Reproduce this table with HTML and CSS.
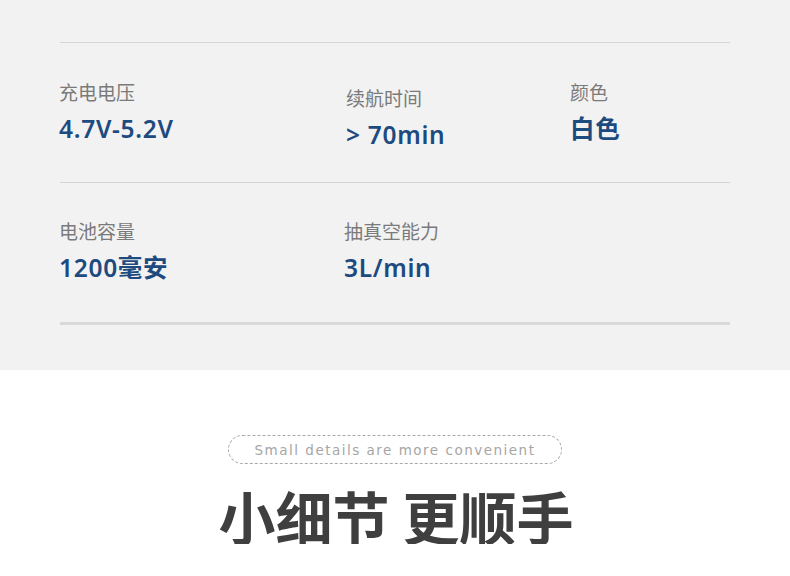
FILE: index.html
```html
<!DOCTYPE html>
<html lang="zh-CN">
<head>
<meta charset="utf-8">
<title>参数</title>
<link rel="stylesheet" href="styles.css">
</head>
<body>
<section class="specs">
  <div class="row">
    <div class="item">
      <div class="label">充电电压</div>
      <div class="value">4.7V-5.2V</div>
    </div>
    <div class="item item-low">
      <div class="label">续航时间</div>
      <div class="value">&gt; 70min</div>
    </div>
    <div class="item">
      <div class="label">颜色</div>
      <div class="value">白色</div>
    </div>
  </div>
  <div class="row row-last">
    <div class="item item-up">
      <div class="label">电池容量</div>
      <div class="value">1200毫安</div>
    </div>
    <div class="item item-up item-shift">
      <div class="label">抽真空能力</div>
      <div class="value">3L/min</div>
    </div>
  </div>
</section>
<section class="details">
  <div class="pill">Small details are more convenient</div>
  <h2 class="headline">小细节 更顺手</h2>
</section>
</body>
</html>
```

FILE: styles.css
```css
html, body {
  margin: 0;
  padding: 0;
  background: #ffffff;
}
body {
  font-family: "Noto Sans CJK SC", "Noto Sans", sans-serif;
  width: 790px;
  overflow: hidden;
}
.specs {
  background: #f2f2f2;
  height: 370px;
  box-sizing: border-box;
  padding: 42px 60px 0 60px;
}
.row {
  display: grid;
  grid-template-columns: 287px 224px 1fr;
  border-top: 1px solid #d6d6d6;
  height: 139px;
  box-sizing: content-box;
}
.row-last {
  border-bottom: 3px solid #d9d9d9;
}
.item {
  padding-top: 39px;
  display: flex;
  flex-direction: column;
  gap: 12px;
}
.item-low {
  padding-top: 45px;
}
.item-up {
  padding-top: 38px;
}
.item-shift {
  margin-left: -2px;
}
.label {
  font-size: 19px;
  line-height: 20px;
  color: #7a7a7a;
  margin-left: -1px;
}
.value {
  font-family: "Noto Sans", "Noto Sans CJK SC", sans-serif;
  font-size: 24.5px;
  line-height: 30px;
  font-weight: 600;
  letter-spacing: 0.7px;
  color: #1d4a7f;
  margin-left: -1px;
}
.details {
  display: flex;
  flex-direction: column;
  align-items: center;
  padding-top: 65px;
}
.pill {
  width: 334px;
  height: 29px;
  box-sizing: border-box;
  border: 1px dashed #a8a8a8;
  border-radius: 15px;
  display: flex;
  align-items: center;
  justify-content: center;
  font-family: "DejaVu Sans", sans-serif;
  font-size: 13.5px;
  letter-spacing: 1.5px;
  color: #a6a6a6;
}
.headline {
  margin: 23px 0 0 0;
  font-size: 57px;
  line-height: 57px;
  font-weight: 700;
  color: #3f3f3f;
  padding-left: 2px;
}
```
